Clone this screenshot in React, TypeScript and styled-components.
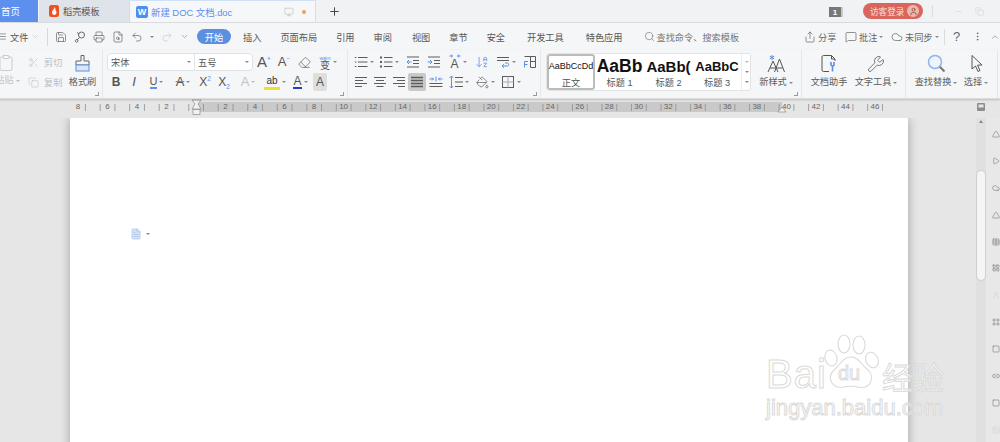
import React from 'react';
import styled, { createGlobalStyle } from 'styled-components';
import {
  Save, Printer, FileSearch, Undo2, Redo2, Search, Wrench, ArrowDownAZ, Copy, Scissors,
  Eraser, Monitor, Minus, Plus, Menu, ChevronDown, ChevronUp, MoreVertical, Share, MessageSquare,
  Cloud, Clipboard, Table, LayoutGrid, Triangle, Play, FileText, Frame, Square, Image,
  User, PaintBucket, Link2,
} from 'lucide-react';

const CJK = `"Liberation Sans", "Noto Sans CJK SC", sans-serif`;

const Global = createGlobalStyle`
  html, body { margin: 0; padding: 0; background: #e6e6e6; overflow: hidden; }
  * { box-sizing: border-box; }
`;

const Screen = styled.div`
  position: relative; width: 1000px; height: 442px; overflow: hidden;
  display: flex; flex-direction: column;
  font-family: ${CJK}; font-size: 9.2px; color: #555;
`;

/* tab bar */
const TabBar = styled.div`
  height: 23px; flex: none; display: flex; align-items: stretch;
  background: #f1f2f4; border-bottom: 1px solid #d9dbe0;
`;
const HomeTab = styled.div`
  width: 38px; background: #5d8fef; color: #fff; display: flex; align-items: center; padding-left: 1px; font-size: 9.4px;
`;
const Tab = styled.div`
  width: 90px; margin-left: 1px; background: #dfe3ea; display: flex; align-items: center; gap: 4px; padding-left: 10px; color: #555;
`;
const ActiveTab = styled.div`
  width: 187px; background: #f6f7f9; display: flex; align-items: center; padding: 0 7px 0 6px; color: #5d8fef; font-size: 9.4px;
  border-left: 1px solid #d9dbe0; border-right: 1px solid #d9dbe0; border-top: 1px solid #cfe0f7;
`;
const DocMark = styled.span`
  width: 12px; height: 12px; background: #4d8ff0; color: #fff; border-radius: 2px; display: flex;
  align-items: center; justify-content: center; font-size: 9px; font-weight: 700; margin-right: 3px;
`;
const Flame = styled.svg` width: 10px; height: 12px; flex: none; `;
const TabTitle = styled.span` flex: 1; white-space: nowrap; `;
const OrangeDot = styled.span` width: 4px; height: 4px; border-radius: 50%; background: #f0a050; margin: 0 2px 0 8px; `;
const NewTab = styled.div` width: 36px; display: flex; align-items: center; justify-content: center; color: #444; `;
const Grow = styled.div` flex: 1; `;
const CountBadge = styled.div`
  width: 12px; height: 10px; margin: 7px 0 0 0; background: #777; color: #fff; font-size: 8px; font-weight: 700;
  display: flex; align-items: center; justify-content: center; box-shadow: 2px 0 0 #c9c9c9;
`;
const LoginPill = styled.div`
  width: 60px; height: 16px; margin: 3px 0 0 22px; border-radius: 8px; background: #d9655b; color: #f8e4e0;
  display: flex; align-items: center; padding-left: 7px; gap: 3px; font-size: 8.6px; white-space: nowrap;
`;
const AvatarDot = styled.span`
  width: 12px; height: 12px; border-radius: 50%; background: #e9b9b2; color: #a0524a; display: flex; align-items: center; justify-content: center; flex: none;
`;
const VBar = styled.div` width: 1px; height: 12px; background: #dcdcdc; margin: 5px 0 0 9px; `;
const WinControls = styled.div` display: flex; align-items: center; gap: 12px; width: 67px; padding-left: 21px; color: #cfcfcf; `;

/* menu bar */
const MenuBar = styled.div`
  height: 27px; flex: none; background: #f5f6f8; display: flex; align-items: center; color: #555;
`;
const FileMenu = styled.div`
  display: flex; align-items: center; width: 50px; margin-left: -2px; gap: 3px; height: 18px; border-right: 1px solid #d8d8d8; flex: none; color: #555;
`;
const QuickBar = styled.div` display: flex; align-items: center; width: 149px; padding-left: 7px; gap: 7px; color: #666; flex: none; `;
const Pill = styled.div`
  width: 34px; height: 15px; border-radius: 8px; background: #5b8fdf; color: #fff; display: flex; align-items: center; justify-content: center; flex: none;
`;
const MenuItem = styled.div<{ $gap?: number }>` margin-left: ${p => p.$gap ?? 19}px; white-space: nowrap; flex: none; `;
const SearchCmd = styled.div` display: flex; align-items: center; gap: 2px; margin-left: 21px; color: #777; white-space: nowrap; flex: none; `;
const MenuRight = styled.div` margin-left: auto; display: flex; align-items: center; flex: none; width: 196px; color: #666; white-space: nowrap; `;
const MenuAction = styled.div<{ $w: number; $sep?: boolean }>`
  width: ${p => p.$w}px; display: flex; align-items: center; gap: 2px; flex: none;
  ${p => (p.$sep ? 'border-right: 1px solid #dcdcdc; height: 16px;' : '')}
`;
const HelpAction = styled(MenuAction)` padding-left: 8px; `;

/* ribbon */
const Ribbon = styled.div`
  height: 49px; flex: none; display: flex; background: #f5f6f8; border-bottom: 1px solid #dcdcdc; box-shadow: 0 1px 2px rgba(0,0,0,.18); position: relative; z-index: 1;
`;
const Group = styled.div<{ $w: number; $pad?: number }>`
  position: relative; width: ${p => p.$w}px; flex: none; padding-left: ${p => p.$pad ?? 0}px; display: flex;
  border-right: 1px solid #e6e7ea;
`;
const Launcher = styled.i`
  position: absolute; right: 3px; bottom: 2px; width: 4px; height: 4px; border-right: 1px solid #999; border-bottom: 1px solid #999;
`;
const Rows = styled.div` display: flex; flex-direction: column; gap: 2px; padding-top: 3px; `;
const Row = styled.div` display: flex; align-items: center; height: 18px; `;
const Tool = styled.div<{ $w: number; $tone?: string; $dim?: boolean }>`
  width: ${p => p.$w}px; height: 18px; flex: none; display: flex; align-items: center; justify-content: center; gap: 2px;
  color: ${p => (p.$dim ? '#bdbdbd' : '#5c5c5c')};
  ${p => (p.$tone ? `background: ${p.$tone}; border-radius: 2px;` : '')}
`;
const Caret = styled.i<{ $light?: boolean }>`
  width: 0; height: 0; flex: none; border-left: 2px solid transparent; border-right: 2px solid transparent; border-top: 2px solid ${p => (p.$light ? '#bbb' : '#888')};
`;
const Glyph = styled.span<{ $bold?: boolean; $italic?: boolean; $size?: number; $under?: string; $strike?: boolean; $color?: string }>`
  font-family: "Liberation Sans", sans-serif; font-size: ${p => p.$size ?? 12}px; line-height: 12px;
  font-weight: ${p => (p.$bold ? 700 : 400)}; font-style: ${p => (p.$italic ? 'italic' : 'normal')};
  color: ${p => p.$color ?? '#555'};
  ${p => (p.$under ? `border-bottom: 2px solid ${p.$under};` : '')}
  ${p => (p.$strike ? 'text-decoration: line-through; text-decoration-color: #d9655b;' : '')}
  sup, sub { font-size: 6.5px; color: #5d8fef; line-height: 0; }
`;
const MarkedBox = styled.span`
  font-size: 10px; line-height: 12px; font-family: "Liberation Sans", sans-serif; color: #333; padding: 0 2px; border-bottom: 3px solid #eee12a;
`;
const Phonetic = styled.span`
  display: flex; flex-direction: column; align-items: center; font-size: 10px; line-height: 9px; color: #555;
  small { font-size: 6px; line-height: 6px; color: #5d8fef; }
`;
const SpacedA = styled.span`
  display: flex; flex-direction: column; align-items: center; color: #5d8fef;
`;
const ClipClear = styled.div` display: flex; flex-direction: column; width: 39px; margin-left: 28px; `;
const ClipRow = styled.div` display: flex; align-items: center; gap: 5px; height: 18px; color: #bdbdbd; white-space: nowrap; `;
const PasteCol = styled.div`
  position: absolute; left: -4px; top: 4px; width: 20px; color: #c6c6c6; display: flex; flex-direction: column; gap: 3px; align-items: center; white-space: nowrap;
`;
const PasteLabel = styled.span` display: flex; align-items: center; gap: 2px; line-height: 11px; margin-left: 3px; `;
const Big = styled.div<{ $w: number }>`
  width: ${p => p.$w}px; flex: none; display: flex; flex-direction: column; align-items: center; padding-top: 4px; gap: 4px; color: #5c5c5c; height: 46px;
`;
const BigIcon = styled.div` height: 19px; display: flex; align-items: center; justify-content: center; `;
const BigLabel = styled.div` display: flex; align-items: center; gap: 2px; white-space: nowrap; line-height: 11px; `;
const FontBox = styled.div`
  width: 146px; height: 18px; flex: none; background: #fff; border: 1px solid #e0e1e4; border-radius: 4px; display: flex; color: #555;
`;
const FontField = styled.div<{ $w: number }>`
  width: ${p => p.$w}px; display: flex; align-items: center; justify-content: space-between; padding: 0 3px; border-right: 1px solid #e6e6e6; flex: none;
  &:last-child { border-right: 0; flex: 1; }
`;
const Gallery = styled.div`
  margin: 3px 0 0 5px; width: 205px; height: 38px; background: #fff; border: 1px solid #e4e4e4; border-radius: 3px; display: flex; overflow: hidden; flex: none;
`;
const StyleCard = styled.div<{ $on?: boolean; $w: number }>`
  width: ${p => p.$w}px; flex: none; height: 100%; display: flex; flex-direction: column; align-items: center; overflow: hidden;
  ${p => (p.$on ? 'box-shadow: inset 0 0 0 2px #bcbcbc; border-radius: 3px;' : '')}
`;
const Sample = styled.div<{ $size: number; $bold?: boolean }>`
  height: 24px; display: flex; align-items: center; font-family: "Liberation Sans", sans-serif; color: #111; white-space: nowrap;
  font-size: ${p => p.$size}px; font-weight: ${p => (p.$bold ? 700 : 400)};
`;
const StyleName = styled.div` color: #555; line-height: 11px; white-space: nowrap; `;
const GalleryScroll = styled.div`
  margin-left: auto; width: 10px; flex: none; border-left: 1px solid #eee; display: flex; flex-direction: column; align-items: center; justify-content: space-around; padding: 3px 0; color: #aaa;
`;

/* ruler */
const RulerBar = styled.div` height: 19px; flex: none; background: #e6e6e6; position: relative; `;
const RulerArt = styled.svg` display: block; width: 1000px; height: 19px; font-family: "Liberation Sans", sans-serif; `;

/* workspace */
const Workspace = styled.div` flex: 1; min-height: 0; display: flex; background: #e6e6e6; `;
const Canvas = styled.div` width: 976px; flex: none; padding-left: 70px; overflow: hidden; `;
const Sheet = styled.div`
  position: relative; width: 838px; height: 400px; background: #fff; box-shadow: 0 0 10px rgba(0,0,0,.3);
  padding: 110px 0 0 60px;
`;
const ParaMark = styled.div` display: flex; align-items: center; gap: 4px; color: #a9c3ea; `;
const Track = styled.div`
  width: 10px; flex: none; background: #e0e0e0; position: relative; padding-top: 2px; display: flex; flex-direction: column; align-items: center;
`;
const Arrow = styled.i` width: 0; height: 0; border-left: 2px solid transparent; border-right: 2px solid transparent; border-bottom: 3px solid #888; `;
const Thumb = styled.div` width: 10px; height: 111px; margin-top: 47px; background: #f5f5f5; border: 1px solid #cfcfcf; border-radius: 5px; `;
const Rail = styled.div`
  flex: 1; overflow: hidden; background: #e8e8e8; padding: 7px 0 0 6px; display: flex; flex-direction: column; gap: 8.9px; color: #666;
`;
const RailIcon = styled.div<{ $dim?: boolean }>` height: 18px; flex: none; display: flex; align-items: center; color: ${p => (p.$dim ? '#d0d0d0' : '#666')}; `;

/* watermark */
const Watermark = styled.div`
  position: absolute; left: 766px; top: 334px; width: 186px; height: 90px; display: flex; flex-direction: column; pointer-events: none; z-index: 3;
`;
const MarkTop = styled.div` display: flex; align-items: flex-end; height: 60px; position: relative; `;
const Outline = styled.span<{ $size: number }>`
  font-family: "Liberation Sans", "Noto Sans CJK SC", sans-serif; font-size: ${p => p.$size}px; line-height: 1; color: rgba(255,255,255,.55);
  -webkit-text-stroke: 1px #dadada; white-space: nowrap;
`;
const Paw = styled.svg` position: absolute; left: 57px; top: 0; width: 56px; height: 58px; `;
const BaiText = styled(Outline)` width: 116px; letter-spacing: 1px; `;
const DuText = styled(Outline)` position: absolute; left: 72px; bottom: 11px; `;
const MarkZh = styled(Outline)` letter-spacing: 0; `;
const MarkUrl = styled(Outline)` margin-top: 3px; `;

const Draw = styled.svg<{ $s?: number }>`
  width: ${p => p.$s ?? 14}px; height: ${p => p.$s ?? 14}px; flex: none; fill: none; stroke: currentColor; stroke-width: 1; display: block;
`;
const BLUE = '#5b8fdf';

const BulletsIcon = () => (
  <Draw viewBox="0 0 14 14"><path d="M4 2.5h9.5M4 7h9.5M4 11.5h9.5M.8 2.5h1.6M.8 7h1.6M.8 11.5h1.6" /></Draw>
);
const NumberedIcon = () => (
  <Draw viewBox="0 0 14 14"><path d="M5 2.5h8.5M5 7h8.5M5 11.5h8.5" /><path strokeWidth="2" d="M1 2.5h2M1 7h2M1 11.5h2" /></Draw>
);
const IndentIcon = ({ out }: { out?: boolean }) => (
  <Draw viewBox="0 0 14 14">
    <path d="M1 2h12M7 5.5h6M7 8.5h6M1 12h12" />
    <path stroke={BLUE} d={out ? 'M5.5 7H1M3 5L1 7l2 2' : 'M0.5 7H5M3 5l2 2-2 2'} />
  </Draw>
);
const AlignIcon = ({ kind }: { kind: 'l' | 'c' | 'r' | 'j' }) => {
  const d = {
    l: 'M1 2.5h12M1 5.5h8M1 8.5h12M1 11.5h7',
    c: 'M1 2.5h12M3 5.5h8M1 8.5h12M3.5 11.5h7',
    r: 'M1 2.5h12M5 5.5h8M1 8.5h12M6 11.5h7',
    j: 'M1 2.5h12M1 5.5h12M1 8.5h12M1 11.5h12',
  }[kind];
  return <Draw viewBox="0 0 14 14"><path d={d} strokeWidth={kind === 'j' ? 1.3 : 1} /></Draw>;
};
const DistributeIcon = () => (
  <Draw viewBox="0 0 14 14">
    <path d="M.5 8.5h13M.5 11.5h13" />
    <path stroke={BLUE} d="M.5 4h4M3 2.5 4.5 4 3 5.5M13.5 4h-4M11 2.5 9.5 4 11 5.5M7 1.5v5" />
  </Draw>
);
const LineSpaceIcon = () => (
  <Draw viewBox="0 0 14 14">
    <path d="M6 2.5h8M6 7h8M6 11.5h8" />
    <path stroke={BLUE} d="M2.5 1v12M.8 2.8 2.5 1l1.7 1.8M.8 11.2 2.5 13l1.7-1.8" />
  </Draw>
);
const ParaIcon = () => (
  <Draw viewBox="0 0 14 14">
    <path d="M1 2.5h12M1 5.5h12" />
    <path stroke={BLUE} d="M6 11h5.5c1.5 0 1.5-3 0-3H9M8 9.3 6 11l2 1.7" />
  </Draw>
);
const ColumnsIcon = () => (
  <Draw viewBox="0 0 14 14">
    <path d="M1.5 1.5h11v11h-5M7.5 1.5v11M7.5 6.5h5" />
    <path stroke={BLUE} d="M1.5 6.5v6M1.5 6.5h3.5M1.5 9.5h3" />
  </Draw>
);
const BordersIcon = () => (
  <Draw viewBox="0 0 14 14">
    <rect x="1.5" y="1.5" width="11" height="11" />
    <path stroke="#aaa" d="M7 1.5v11M1.5 7h11" />
  </Draw>
);
const SpacingArrows = () => (
  <Draw $s={12} viewBox="0 0 12 4" style={{ height: 4 }}>
    <path d="M.5 2h3M2 .7 3.5 2 2 3.3M11.5 2h-3M10 .7 8.5 2 10 3.3" />
  </Draw>
);
const BrushIcon = () => (
  <Draw $s={19} viewBox="0 0 19 19">
    <path d="M8 1.5h3v5.5h5v4H3V7h5z" stroke="#666" />
    <rect x="3" y="11" width="13" height="6" stroke={BLUE} fill="#dbe7f8" />
  </Draw>
);
const NewStyleIcon = () => (
  <Draw $s={19} viewBox="0 0 19 19">
    <path d="M1 18 6 7l5 11M3 14h6M7.5 18l5-13 5 13M9.5 14h6" stroke="#555" />
    <path d="M5 1v5M2.8 2.2l4.4 2.6M7.2 2.2 2.8 4.8" stroke={BLUE} />
  </Draw>
);
const DocHelperIcon = () => (
  <Draw $s={19} viewBox="0 0 19 19">
    <path d="M9 17.5H3.5a1.5 1.5 0 0 1-1.5-1.5V3A1.5 1.5 0 0 1 3.500 1.500h8L15 5v2M11.500 1.500V5H15" stroke="#555" />
    <path d="M11 8v2.500a1.500 1.500 0 0 0 3 0V8M12.500 12v5.500" stroke={BLUE} strokeWidth="1.600" />
  </Draw>
);
const LensIcon = () => (
  <Draw $s={19} viewBox="0 0 19 19">
    <circle cx="8" cy="8" r="6.500" stroke="#8fb4ec" strokeWidth="1.500" fill="#eef4fd" />
    <path d="M12.800 12.800 17.500 17.500" stroke="#777" strokeWidth="2" />
  </Draw>
);
const PointerIcon = () => (
  <Draw $s={19} viewBox="0 0 19 19">
    <path d="M5 1.500v13.500l3.500-3 2.500 5.500 2-1-2.500-5.300 4.500-.2z" stroke="#555" />
  </Draw>
);
const CloudLinkIcon = () => (
  <Draw $s={12} viewBox="0 0 12 12">
    <circle cx="7.500" cy="4" r="3" /><path d="M3 1.500 5 3M5.500 6.500 3 9M1.500 10.500a1.300 1.300 0 1 0 2-1.600 1.300 1.300 0 0 0-2 1.600z" />
  </Draw>
);

const ico = { size: 12, strokeWidth: 1.4 } as const;
const rail = { size: 18, strokeWidth: 1.5 } as const;

const rulerTicks = Array.from({ length: 55 }, (_, i) => 85.4 + i * 14.76);
const rulerLabels = [
  ...[8, 6, 4, 2].map(n => ({ n, x: 196 - n * 14.76 })),
  ...Array.from({ length: 23 }, (_, i) => ({ n: (i + 1) * 2, x: 196 + (i + 1) * 2 * 14.76 })),
];

const tabsMid = [
  ['插入', 12], ['页面布局', 19], ['引用', 19], ['审阅', 19], ['视图', 20], ['章节', 19], ['安全', 19], ['开发工具', 22], ['特色应用', 22],
] as const;

export default function App() {
  return (
    <Screen>
      <Global />
      <TabBar>
        <HomeTab>首页</HomeTab>
        <Tab>
          <Flame viewBox="0 0 10 12"><rect width="10" height="12" rx="2.5" fill="#f0501e" /><path d="M5.5 2C6 4 3 5 3 7.5 3 9 4 10 5.2 10S7.5 9 7.5 7.5C7.5 6 6.5 6 6.5 4.5 6.5 3.5 6 2.5 5.5 2Z" fill="#fff" /></Flame>
          稻壳模板
        </Tab>
        <ActiveTab>
          <DocMark>W</DocMark>
          <TabTitle>新建 DOC 文档.doc</TabTitle>
          <Monitor size={10} strokeWidth={1.3} color="#b5b5b5" />
          <OrangeDot />
        </ActiveTab>
        <NewTab><Plus size={13} strokeWidth={1.8} /></NewTab>
        <Grow />
        <CountBadge>1</CountBadge>
        <LoginPill>访客登录<AvatarDot><User size={9} strokeWidth={2.4} /></AvatarDot></LoginPill>
        <VBar />
        <WinControls>
          <Minus size={9} strokeWidth={1.4} />
          <Copy size={9} strokeWidth={1.4} />
        </WinControls>
      </TabBar>

      <MenuBar>
        <FileMenu>
          <Menu size={9} strokeWidth={1.5} />
          文件
          <ChevronDown size={9} strokeWidth={1.2} color="#aaa" />
        </FileMenu>
        <QuickBar>
          <Save {...ico} />
          <CloudLinkIcon />
          <Printer {...ico} />
          <FileSearch {...ico} />
          <Undo2 {...ico} /><Caret />
          <Redo2 {...ico} color="#ccc" />
          <ChevronDown size={9} strokeWidth={1.4} />
        </QuickBar>
        <Pill>开始</Pill>
        {tabsMid.map(([t, g]) => <MenuItem key={t} $gap={g}>{t}</MenuItem>)}
        <SearchCmd><Search size={11} strokeWidth={1.4} />查找命令、搜索模板</SearchCmd>
        <MenuRight>
          <MenuAction $w={41}><Share {...ico} />分享</MenuAction>
          <MenuAction $w={46}><MessageSquare {...ico} />批注<Caret /></MenuAction>
          <MenuAction $w={54} $sep><Cloud {...ico} />未同步<Caret /></MenuAction>
          <HelpAction $w={27}>
            <Glyph $size={13} $color="#666">?</Glyph>
          </HelpAction>
          <MenuAction $w={18}><MoreVertical size={11} strokeWidth={1.6} /></MenuAction>
          <ChevronUp size={12} strokeWidth={1.3} />
        </MenuRight>
      </MenuBar>

      <Ribbon>
        <Group $w={103}>
          <PasteCol>
            <Clipboard size={18} strokeWidth={1.2} />
            <PasteLabel>粘贴<Caret $light /></PasteLabel>
          </PasteCol>
          <ClipClear>
            <Rows>
              <ClipRow><Scissors size={11} strokeWidth={1.2} />剪切</ClipRow>
              <ClipRow><Copy size={11} strokeWidth={1.2} />复制</ClipRow>
            </Rows>
          </ClipClear>
          <Big $w={31}>
            <BigIcon><BrushIcon /></BigIcon>
            <BigLabel>格式刷</BigLabel>
          </Big>
          <Launcher />
        </Group>
        <Group $w={245} $pad={4}>
          <Rows>
            <Row>
              <FontBox>
                <FontField $w={87}>宋体<Caret /></FontField>
                <FontField $w={59}>五号<Caret /></FontField>
              </FontBox>
              <Tool $w={22}><Glyph $size={15}>A<sup>+</sup></Glyph></Tool>
              <Tool $w={18}><Glyph $size={13}>A<sup>−</sup></Glyph></Tool>
              <Tool $w={22}><Eraser size={13} strokeWidth={1.3} /></Tool>
              <Tool $w={26}><Phonetic><small>wén</small>变</Phonetic><Caret /></Tool>
            </Row>
            <Row>
              <Tool $w={18}><Glyph $bold $size={12}>B</Glyph></Tool>
              <Tool $w={18}><Glyph $italic $size={13}>I</Glyph></Tool>
              <Tool $w={27}><Glyph $size={11} $under="#5d8fef">U</Glyph><Caret /></Tool>
              <Tool $w={26}><Glyph $size={13} $strike>A</Glyph><Caret /></Tool>
              <Tool $w={18}><Glyph $size={12}>X<sup>2</sup></Glyph></Tool>
              <Tool $w={20}><Glyph $size={12}>X<sub>2</sub></Glyph></Tool>
              <Tool $w={28} $dim><Glyph $size={13} $color="#c4c4c4">A</Glyph><Caret $light /></Tool>
              <Tool $w={26}><MarkedBox>ab</MarkedBox><Caret /></Tool>
              <Tool $w={25}><Glyph $size={12} $under="#1f3fd0">A</Glyph><Caret /></Tool>
              <Tool $w={14} $tone="#dedede"><Glyph $size={12}>A</Glyph></Tool>
            </Row>
          </Rows>
          <Launcher />
        </Group>
        <Group $w={193} $pad={3}>
          <Rows>
            <Row>
              <Tool $w={25}><BulletsIcon /><Caret /></Tool>
              <Tool $w={26}><NumberedIcon /><Caret /></Tool>
              <Tool $w={22}><IndentIcon out /></Tool>
              <Tool $w={20}><IndentIcon /></Tool>
              <Tool $w={27}><SpacedA><SpacingArrows /><Glyph $size={12}>A</Glyph></SpacedA><Caret /></Tool>
              <Tool $w={22}><ArrowDownAZ size={14} strokeWidth={1.3} color={BLUE} /></Tool>
              <Tool $w={26}><ParaIcon /><Caret /></Tool>
              <Tool $w={22}><ColumnsIcon /></Tool>
            </Row>
            <Row>
              <Tool $w={19}><AlignIcon kind="l" /></Tool>
              <Tool $w={19}><AlignIcon kind="c" /></Tool>
              <Tool $w={19}><AlignIcon kind="r" /></Tool>
              <Tool $w={18} $tone="#c9c9c9"><AlignIcon kind="j" /></Tool>
              <Tool $w={20}><DistributeIcon /></Tool>
              <Tool $w={26}><LineSpaceIcon /><Caret /></Tool>
              <Tool $w={26}><PaintBucket size={13} strokeWidth={1.3} /><Caret /></Tool>
              <Tool $w={26}><BordersIcon /><Caret /></Tool>
            </Row>
          </Rows>
          <Launcher />
        </Group>
        <Group $w={261}>
          <Gallery>
            <StyleCard $on $w={48}>
              <Sample $size={9}>AaBbCcDd</Sample>
              <StyleName>正文</StyleName>
            </StyleCard>
            <StyleCard $w={49}>
              <Sample $size={17.5} $bold>AaBb</Sample>
              <StyleName>标题 1</StyleName>
            </StyleCard>
            <StyleCard $w={49}>
              <Sample $size={15} $bold>AaBb(</Sample>
              <StyleName>标题 2</StyleName>
            </StyleCard>
            <StyleCard $w={48}>
              <Sample $size={13} $bold>AaBbC</Sample>
              <StyleName>标题 3</StyleName>
            </StyleCard>
            <GalleryScroll><Caret $light /><Caret /><Caret /></GalleryScroll>
          </Gallery>
          <Big $w={50}>
            <BigIcon><NewStyleIcon /></BigIcon>
            <BigLabel>新样式<Caret /></BigLabel>
          </Big>
          <Launcher />
        </Group>
        <Group $w={104} $pad={4}>
          <Big $w={46}>
            <BigIcon><DocHelperIcon /></BigIcon>
            <BigLabel>文档助手</BigLabel>
          </Big>
          <Big $w={48}>
            <BigIcon><Wrench size={18} strokeWidth={1.1} /></BigIcon>
            <BigLabel>文字工具<Caret /></BigLabel>
          </Big>
        </Group>
        <Group $w={92} $pad={4}>
          <Big $w={52}>
            <BigIcon><LensIcon /></BigIcon>
            <BigLabel>查找替换<Caret /></BigLabel>
          </Big>
          <Big $w={28}>
            <BigIcon><PointerIcon /></BigIcon>
            <BigLabel>选择<Caret /></BigLabel>
          </Big>
        </Group>
      </Ribbon>

      <RulerBar>
        <RulerArt viewBox="0 0 1000 19">
          <rect x="196" y="3" width="586" height="10" fill="#c9c9c9" />
          {rulerTicks.map((x, i) => <line key={i} x1={x} x2={x} y1="5" y2="12" stroke="#8f8f8f" strokeWidth="0.8" />)}
          {rulerLabels.map(l => (
            <text key={l.n + '-' + l.x} x={l.x} y="9.5" fontSize="8" fill="#666" textAnchor="middle">{l.n}</text>
          ))}
          <path d="M192 1h9l-3 4 3 5h-9l3-5z" fill="#f2f2f2" stroke="#8a8a8a" strokeWidth=".7" />
          <rect x="193" y="10.500" width="7" height="5" fill="#f2f2f2" stroke="#8a8a8a" strokeWidth=".7" />
          <path d="M778 13l4-5 4 5z" fill="#f2f2f2" stroke="#8a8a8a" strokeWidth=".7" />
          <rect x="977" y="4" width="8" height="8" rx="1" fill="#8c8c8c" />
          <rect x="978.500" y="5.500" width="5" height="3" fill="#e6e6e6" />
        </RulerArt>
      </RulerBar>

      <Workspace>
        <Canvas>
          <Sheet>
            <ParaMark><FileText size={12} strokeWidth={1.5} fill="#d5e2f5" /><Caret /></ParaMark>
          </Sheet>
        </Canvas>
        <Track>
          <Arrow />
          <Thumb />
        </Track>
        <Rail>
          <RailIcon><Triangle {...rail} /></RailIcon>
          <RailIcon><Play {...rail} /></RailIcon>
          <RailIcon><Cloud {...rail} /></RailIcon>
          <RailIcon><Triangle {...rail} /></RailIcon>
          <RailIcon><Table {...rail} /></RailIcon>
          <RailIcon><LayoutGrid {...rail} /></RailIcon>
          <RailIcon $dim><User {...rail} /></RailIcon>
          <RailIcon><Frame {...rail} /></RailIcon>
          <RailIcon><Square {...rail} /></RailIcon>
          <RailIcon><Link2 {...rail} /></RailIcon>
          <RailIcon><Square {...rail} /></RailIcon>
          <RailIcon $dim><Image {...rail} /></RailIcon>
        </Rail>
      </Workspace>

      <Watermark>
        <MarkTop>
          <Paw viewBox="0 0 56 58" fill="rgba(255,255,255,.4)" stroke="#dadada" strokeWidth="1.1">
            <ellipse cx="8" cy="24" rx="6" ry="8" transform="rotate(-15 8 24)" />
            <ellipse cx="21" cy="10" rx="6" ry="9" />
            <ellipse cx="36" cy="11" rx="6" ry="9" />
            <ellipse cx="49" cy="26" rx="6" ry="8" transform="rotate(-25 49 26)" />
            <path d="M28 23c8 0 10 8 17 13 8 7 2 20-10 17-5-1-9-1-14 0C9 55 3 44 11 36c6-5 9-13 17-13Z" />
          </Paw>
          <BaiText $size={40}>Bai</BaiText>
          <DuText $size={20}>du</DuText>
          <MarkZh $size={31}>经验</MarkZh>
        </MarkTop>
        <MarkUrl $size={22}>jingyan.baidu.com</MarkUrl>
      </Watermark>
    </Screen>
  );
}
